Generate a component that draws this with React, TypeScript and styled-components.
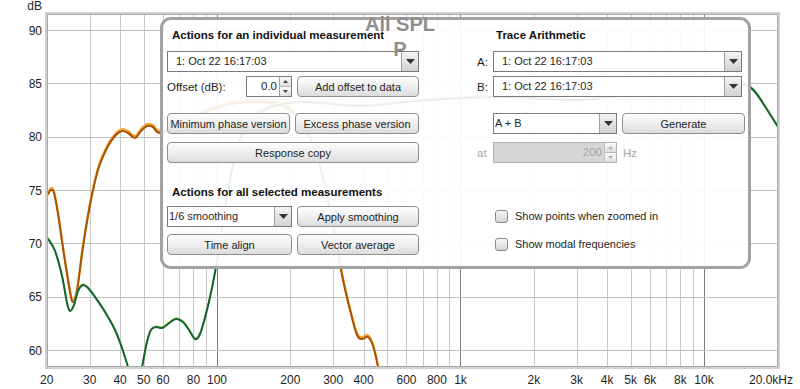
import styled, { createGlobalStyle } from "styled-components";

const GlobalStyle = createGlobalStyle`
  html, body {
    margin: 0;
    padding: 0;
    background: #ffffff;
  }
  body {
    font-family: "Liberation Sans", Arial, sans-serif;
    font-size: 12px;
    color: #1e1e1e;
  }
`;

// chart geometry
const X0 = 46.8;
const DECADE = 243.5;
const xOf = (f: number) => X0 + DECADE * Math.log10(f / 20);
const yOf = (db: number) => 30 + (90 - db) * (320 / 30);

const PLOT = { left: 47, top: 14, right: 778, bottom: 367 };

const gridFreqs = [
  20, 30, 40, 50, 60, 70, 80, 90, 100, 200, 300, 400, 500, 600, 700, 800, 900,
  1000, 2000, 3000, 4000, 5000, 6000, 7000, 8000, 9000, 10000,
];
const decades = [100, 1000, 10000];

const xLabels: [number, string][] = [
  [20, "20"],
  [30, "30"],
  [40, "40"],
  [50, "50"],
  [60, "60"],
  [80, "80"],
  [100, "100"],
  [200, "200"],
  [300, "300"],
  [400, "400"],
  [600, "600"],
  [800, "800"],
  [1000, "1k"],
  [2000, "2k"],
  [3000, "3k"],
  [4000, "4k"],
  [5000, "5k"],
  [6000, "6k"],
  [8000, "8k"],
  [10000, "10k"],
];

const dbLines = [60, 65, 70, 75, 80, 85, 90];

const orangePts: [number, number][] = [
  [44, 201], [48, 194], [51, 190], [54, 193], [58, 214], [64, 255], [70, 292],
  [73, 302], [77, 291], [83, 247], [90, 205], [98, 170], [107, 148],
  [115, 136], [122, 131], [128, 133], [135, 138], [141, 131], [147, 126],
  [153, 127], [160, 133], [180, 126], [210, 110], [250, 102], [290, 110],
  [315, 150], [332, 220], [342, 275], [350, 310], [357, 335], [362, 339],
  [368, 337], [373, 346], [378, 367], [382, 392],
];

const greenPts: [number, number][] = [
  [44, 236], [48, 239], [55, 251], [62, 276], [67, 303], [70, 311], [74, 305],
  [78, 291], [83, 285], [88, 288], [95, 297], [105, 312], [115, 330],
  [122, 348], [128, 367], [134, 388], [140, 380], [143, 362], [147, 342],
  [151, 330], [156, 327], [162, 328], [168, 324], [176, 319], [183, 322],
  [189, 330], [195, 339], [200, 334], [206, 314], [212, 288], [218, 255],
  [228, 190], [240, 140], [260, 112], [300, 102], [360, 106], [430, 100],
  [500, 97], [580, 100], [640, 93], [700, 88], [735, 84], [748, 86],
  [756, 93], [766, 108], [778, 127], [784, 136],
];

function smoothPath(pts: [number, number][]) {
  let d = `M${pts[0][0]},${pts[0][1]}`;
  for (let i = 0; i < pts.length - 1; i++) {
    const p0 = pts[i - 1] || pts[i];
    const p1 = pts[i];
    const p2 = pts[i + 1];
    const p3 = pts[i + 2] || p2;
    const c1x = p1[0] + (p2[0] - p0[0]) / 6;
    const c1y = p1[1] + (p2[1] - p0[1]) / 6;
    const c2x = p2[0] - (p3[0] - p1[0]) / 6;
    const c2y = p2[1] - (p3[1] - p1[1]) / 6;
    d += ` C${c1x.toFixed(1)},${c1y.toFixed(1)} ${c2x.toFixed(1)},${c2y.toFixed(
      1
    )} ${p2[0]},${p2[1]}`;
  }
  return d;
}

const Page = styled.div`
  position: relative;
  width: 800px;
  height: 389px;
  overflow: hidden;
  background: #ffffff;
`;

const ChartSvg = styled.svg`
  display: block;
  width: 800px;
  height: 389px;

  text {
    font-family: "Liberation Sans", Arial, sans-serif;
    font-size: 12px;
    fill: #1e1e1e;
  }
`;

function Graph() {
  const orange = smoothPath(orangePts);
  const green = smoothPath(greenPts);
  return (
    <ChartSvg viewBox="0 0 800 389">
      <defs>
        <clipPath id="plotClip">
          <rect
            x={PLOT.left + 1}
            y={PLOT.top + 1}
            width={PLOT.right - PLOT.left - 2}
            height={PLOT.bottom - PLOT.top - 2}
          />
        </clipPath>
      </defs>
      <rect
        x={PLOT.left}
        y={PLOT.top}
        width={PLOT.right - PLOT.left}
        height={PLOT.bottom - PLOT.top}
        fill="#ffffff"
      />
      {gridFreqs.map((f) => {
        const x = Math.round(xOf(f)) + 0.5;
        const dark = decades.includes(f);
        return (
          <line
            key={f}
            x1={x}
            x2={x}
            y1={PLOT.top}
            y2={PLOT.bottom}
            stroke={dark ? "#7c7c7c" : "#c6c6c6"}
            strokeWidth={1}
          />
        );
      })}
      {dbLines.map((db) => {
        const y = Math.round(yOf(db)) + 0.5;
        return (
          <line
            key={db}
            x1={PLOT.left}
            x2={PLOT.right}
            y1={y}
            y2={y}
            stroke="#c2c2c2"
            strokeWidth={1}
          />
        );
      })}
      <g clipPath="url(#plotClip)" fill="none" strokeLinejoin="round">
        <path d={orange} stroke="#f3a43c" strokeWidth={2} transform="translate(0,-2)" />
        <path d={orange} stroke="#a85300" strokeWidth={2} />
        <path d={green} stroke="#c9d86a" strokeWidth={1.5} transform="translate(0,-1)" />
        <path d={green} stroke="#0f6430" strokeWidth={2} />
      </g>
      <rect
        x={PLOT.left - 0.5}
        y={PLOT.top - 0.5}
        width={PLOT.right - PLOT.left + 1}
        height={PLOT.bottom - PLOT.top + 1}
        fill="none"
        stroke="#d0d0d0"
        strokeWidth={3}
      />
      <rect
        x={PLOT.left + 0.5}
        y={PLOT.top + 0.5}
        width={PLOT.right - PLOT.left - 1}
        height={PLOT.bottom - PLOT.top - 1}
        fill="none"
        stroke="#a9a9a9"
        strokeWidth={1}
      />
      <text x={42} y={10} textAnchor="end">
        dB
      </text>
      {dbLines.map((db) => (
        <text key={db} x={42} y={yOf(db) + 4.5} textAnchor="end">
          {db}
        </text>
      ))}
      {xLabels.map(([f, label]) => (
        <text key={f} x={xOf(f)} y={384} textAnchor="middle">
          {label}
        </text>
      ))}
      <text x={793} y={384} textAnchor="end">
        20.0kHz
      </text>
    </ChartSvg>
  );
}

const Title = styled.div`
  position: absolute;
  left: 360px;
  top: 12px;
  width: 80px;
  text-align: center;
  font-family: "Liberation Sans", Arial, sans-serif;
  font-weight: bold;
  font-size: 20px;
  line-height: 25px;
  color: #8e8e8e;
  z-index: 2;
  pointer-events: none;
`;

const Panel = styled.div`
  position: absolute;
  left: 160px;
  top: 17px;
  width: 591px;
  height: 252px;
  box-sizing: border-box;
  border: 3px solid #a2a2a2;
  border-radius: 11px;
  background: rgba(255, 255, 255, 0.9);
  padding: 8px 3px 0 4px;
  display: grid;
  grid-template-columns: 252px 269px;
  column-gap: 57px;
  align-items: start;
  font-size: 11px;
`;

const Column = styled.div`
  display: flex;
  flex-direction: column;
`;

const SectionTitle = styled.div<{ $mt?: number; $indent?: number }>`
  font-weight: bold;
  font-size: 11.5px;
  line-height: 15px;
  height: 15px;
  margin-top: ${(p) => p.$mt ?? 0}px;
  padding-left: ${(p) => p.$indent ?? 0}px;
  color: #111;
  white-space: nowrap;
`;

const Row = styled.div<{ $mt?: number; $cols?: string }>`
  display: grid;
  grid-template-columns: ${(p) => p.$cols ?? "1fr"};
  column-gap: 5px;
  align-items: center;
  margin-top: ${(p) => p.$mt ?? 0}px;
  height: 21px;
`;

const Inline = styled.div`
  display: flex;
  align-items: center;
  height: 100%;
`;

const Label = styled.span<{ $dim?: boolean }>`
  flex: 1 1 auto;
  color: ${(p) => (p.$dim ? "#a8a8a8" : "#1e1e1e")};
  white-space: nowrap;
  font-size: 11.5px;
`;

const Button = styled.button`
  box-sizing: border-box;
  height: 21px;
  width: 100%;
  padding: 0 2px;
  border: 1px solid #8e8e8e;
  border-radius: 4px;
  background: linear-gradient(#fefefe 0%, #f0f0f0 45%, #dcdcdc 100%);
  font-family: "Liberation Sans", Arial, sans-serif;
  font-size: 11px;
  color: #1e1e1e;
  white-space: nowrap;
`;

const SelectBox = styled.div`
  box-sizing: border-box;
  height: 21px;
  width: 100%;
  display: flex;
  border: 1px solid #7a7a7a;
  background: #ffffff;
`;

const SelectText = styled.span<{ $pad: number }>`
  flex: 1;
  line-height: 19px;
  padding-left: ${(p) => p.$pad}px;
  white-space: nowrap;
  overflow: hidden;
`;

const ArrowButton = styled.span`
  flex: 0 0 16px;
  border-left: 1px solid #a0a0a0;
  background: linear-gradient(#f4f4f4, #d2d2d2);
  display: flex;
  align-items: center;
  justify-content: center;
`;

const Spinner = styled.div<{ $disabled?: boolean; $w: number }>`
  box-sizing: border-box;
  height: 21px;
  width: ${(p) => p.$w}px;
  flex: 0 0 ${(p) => p.$w}px;
  display: flex;
  border: 1px solid ${(p) => (p.$disabled ? "#b4b4b4" : "#7a7a7a")};
  background: ${(p) => (p.$disabled ? "#d6d6d6" : "#ffffff")};
  color: ${(p) => (p.$disabled ? "#a4a4a4" : "#1e1e1e")};
`;

const SpinValue = styled.span`
  flex: 1;
  text-align: right;
  line-height: 19px;
  padding-right: 2px;
  font-size: 11.5px;
`;

const SpinArrows = styled.span<{ $disabled?: boolean }>`
  flex: 0 0 11px;
  display: flex;
  flex-direction: column;
  border-left: 1px solid ${(p) => (p.$disabled ? "#c4c4c4" : "#a0a0a0")};
  background: ${(p) => (p.$disabled ? "#e4e4e4" : "#f2f2f2")};
`;

const SpinHalf = styled.span<{ $top?: boolean }>`
  flex: 1;
  display: flex;
  align-items: center;
  justify-content: center;
  border-bottom: ${(p) => (p.$top ? "1px solid #b8b8b8" : "none")};
  background: linear-gradient(#fafafa, #dedede);
`;

const CheckRow = styled.label<{ $mt: number }>`
  display: flex;
  align-items: center;
  gap: 7px;
  margin-top: ${(p) => p.$mt}px;
  padding-left: 19px;
  height: 14px;
  white-space: nowrap;
`;

const CheckBox = styled.span`
  box-sizing: border-box;
  width: 13px;
  height: 13px;
  border: 1px solid #8a8a8a;
  border-radius: 3px;
  background: linear-gradient(#f6f6f6, #d6d6d6);
`;

const RightLabel = styled.span<{ $dim?: boolean }>`
  color: ${(p) => (p.$dim ? "#a8a8a8" : "#1e1e1e")};
  padding-left: 1px;
  font-size: 11.5px;
`;

function Caret({ color = "#333" }: { color?: string }) {
  return (
    <svg width="9" height="5" viewBox="0 0 9 5">
      <path d="M0 0 L9 0 L4.5 5 Z" fill={color} />
    </svg>
  );
}

function SmallCaret({ up, color }: { up?: boolean; color: string }) {
  return (
    <svg width="5" height="3" viewBox="0 0 5 3">
      <path d={up ? "M0 3 L5 3 L2.5 0 Z" : "M0 0 L5 0 L2.5 3 Z"} fill={color} />
    </svg>
  );
}

function Select({ value, pad = 8 }: { value: string; pad?: number }) {
  return (
    <SelectBox>
      <SelectText $pad={pad}>{value}</SelectText>
      <ArrowButton>
        <Caret />
      </ArrowButton>
    </SelectBox>
  );
}

function SpinBox({
  value,
  width,
  disabled,
}: {
  value: string;
  width: number;
  disabled?: boolean;
}) {
  const c = disabled ? "#b0b0b0" : "#444";
  return (
    <Spinner $w={width} $disabled={disabled}>
      <SpinValue>{value}</SpinValue>
      <SpinArrows $disabled={disabled}>
        <SpinHalf $top>
          <SmallCaret up color={c} />
        </SpinHalf>
        <SpinHalf>
          <SmallCaret color={c} />
        </SpinHalf>
      </SpinArrows>
    </Spinner>
  );
}

export default function App() {
  return (
    <Page>
      <GlobalStyle />
      <Graph />
      <Panel>
        <Column>
          <SectionTitle $indent={5}>Actions for an individual measurement</SectionTitle>
          <Row $mt={8}>
            <Select value="1: Oct 22 16:17:03" />
          </Row>
          <Row $mt={4} $cols="125px 1fr">
            <Inline>
              <Label>Offset (dB):</Label>
              <SpinBox value="0.0" width={46} />
            </Inline>
            <Button>Add offset to data</Button>
          </Row>
          <Row $mt={16} $cols="123px 1fr">
            <Button>Minimum phase version</Button>
            <Button>Excess phase version</Button>
          </Row>
          <Row $mt={8}>
            <Button>Response copy</Button>
          </Row>
          <SectionTitle $mt={22} $indent={5}>
            Actions for all selected measurements
          </SectionTitle>
          <Row $mt={6} $cols="125px 1fr">
            <Select value="1/6 smoothing" pad={1} />
            <Button>Apply smoothing</Button>
          </Row>
          <Row $mt={7} $cols="125px 1fr">
            <Button>Time align</Button>
            <Button>Vector average</Button>
          </Row>
        </Column>
        <Column>
          <SectionTitle $indent={20}>Trace Arithmetic</SectionTitle>
          <Row $mt={8} $cols="12px 249px">
            <RightLabel>A:</RightLabel>
            <Select value="1: Oct 22 16:17:03" />
          </Row>
          <Row $mt={4} $cols="12px 249px">
            <RightLabel>B:</RightLabel>
            <Select value="1: Oct 22 16:17:03" />
          </Row>
          <Row $mt={16} $cols="12px 124px 123px">
            <span />
            <Select value="A + B" pad={1} />
            <Button>Generate</Button>
          </Row>
          <Row $mt={8} $cols="12px 124px 1fr">
            <RightLabel $dim>at</RightLabel>
            <SpinBox value="200" width={124} disabled />
            <RightLabel $dim>Hz</RightLabel>
          </Row>
          <CheckRow $mt={46}>
            <CheckBox />
            Show points when zoomed in
          </CheckRow>
          <CheckRow $mt={14}>
            <CheckBox />
            Show modal frequencies
          </CheckRow>
        </Column>
      </Panel>
      <Title>All SPL P</Title>
    </Page>
  );
}
